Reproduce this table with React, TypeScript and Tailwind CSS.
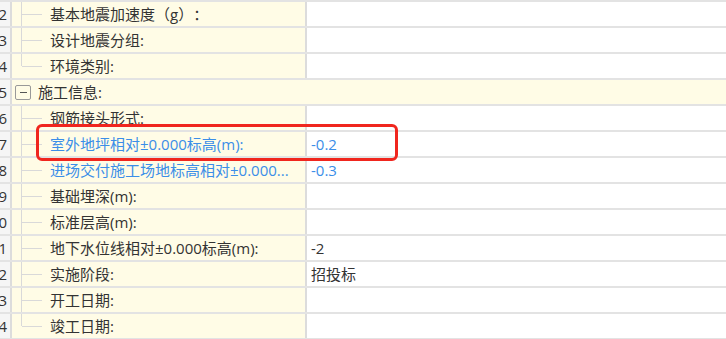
const font = { fontFamily: '"Open Sans", "Noto Sans CJK SC", sans-serif' };

type Row = {
  no: number;
  label: string;
  value?: string;
  blue?: boolean;
  group?: boolean;
  last?: boolean;
  first?: boolean;
};

const rows: Row[] = [
  { no: 12, label: "基本地震加速度（g）：" },
  { no: 13, label: "设计地震分组:" },
  { no: 14, label: "环境类别:", last: true },
  { no: 15, label: "施工信息:", group: true },
  { no: 16, label: "钢筋接头形式:", first: true },
  { no: 17, label: "室外地坪相对±0.000标高(m):", value: "-0.2", blue: true },
  { no: 18, label: "进场交付施工场地标高相对±0.000...", value: "-0.3", blue: true },
  { no: 19, label: "基础埋深(m):" },
  { no: 20, label: "标准层高(m):" },
  { no: 21, label: "地下水位线相对±0.000标高(m):", value: "-2" },
  { no: 22, label: "实施阶段:", value: "招投标" },
  { no: 23, label: "开工日期:" },
  { no: 24, label: "竣工日期:", last: true },
];

function TreeLine({ last, first }: { last?: boolean; first?: boolean }) {
  return (
    <div className="relative h-full w-[38px] shrink-0">
      <div
        className={`absolute left-[9px] w-px bg-[#d9d9d9] ${first ? "-top-[6px]" : "top-0"} ${last ? "h-[12px]" : "bottom-0"}`}
      />
      <div className="absolute left-[10px] top-[12px] h-px w-[20px] bg-[#d9d9d9]" />
    </div>
  );
}

export default function App() {
  return (
    <div
      lang="zh-CN"
      className="relative h-[339px] w-[726px] overflow-hidden bg-white text-[15px] text-[#333] [text-spacing-trim:space-all]"
      style={font}
    >
      <div className="border-t-2 border-[#e3e3e3]">
        {rows.map((r) => (
          <div key={r.no} className="flex h-[26px] border-b-2 border-[#e3e3e3]">
            <div className="flex w-[12px] shrink-0 items-center justify-end overflow-hidden border-r-2 border-[#dcdcdc] bg-[#f5f5f5] pr-[3px]">
              <span className="whitespace-nowrap">{r.no}</span>
            </div>
            {r.group ? (
              <div className="flex flex-1 items-center bg-[#fffce6]">
                <div className="relative ml-[3px] flex h-[15px] w-[16px] items-center justify-center rounded-[2px] border border-[#999] bg-[#fffce6]">
                  <div className="h-px w-[7px] bg-[#555]" />
                </div>
                <span className="ml-[7px] whitespace-nowrap">{r.label}</span>
              </div>
            ) : (
              <>
                <div className="flex w-[295px] shrink-0 items-center overflow-hidden border-r-2 border-[#dcdcdc] bg-[#fffce6]">
                  <TreeLine last={r.last} first={r.first} />
                  <span className={`whitespace-nowrap ${r.blue ? "text-[#3b8ee8]" : ""}`}>{r.label}</span>
                </div>
                <div className="flex flex-1 items-center pl-[4px]">
                  <span className={r.blue ? "text-[#3b8ee8]" : ""}>{r.value}</span>
                </div>
              </>
            )}
          </div>
        ))}
      </div>
      <div className="absolute left-[36px] top-[124px] h-[37px] w-[362px] rounded-[6px] border-[3px] border-[#f0261e]" />
    </div>
  );
}
